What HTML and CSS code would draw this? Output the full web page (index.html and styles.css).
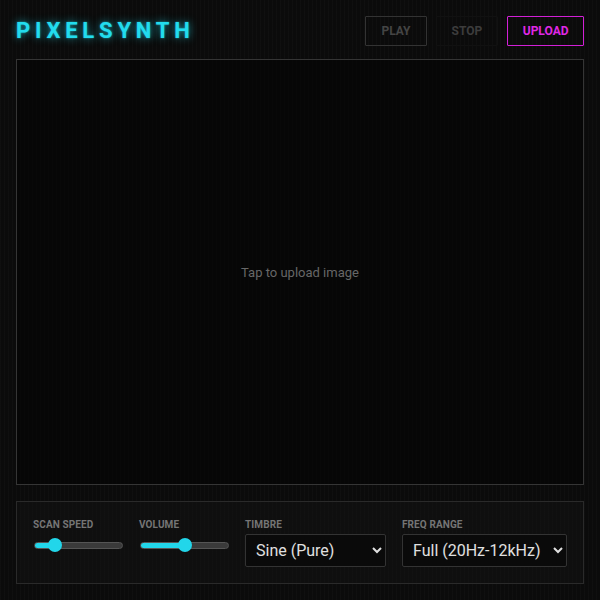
FILE: index.html
```html
<!DOCTYPE html>
<html lang="en">
<head>
<meta charset="utf-8">
<title>PixelSynth</title>
<link rel="stylesheet" href="styles.css">
</head>
<body>
<div class="app">
  <header class="header">
    <h1 class="logo">PIXELSYNTH</h1>
    <div class="actions">
      <button class="btn btn-play" disabled>PLAY</button>
      <button class="btn btn-stop" disabled>STOP</button>
      <button class="btn btn-upload">UPLOAD</button>
    </div>
  </header>
  <div class="stage">
    <span class="stage-hint">Tap to upload image</span>
  </div>
  <div class="panel">
    <div class="control control-slider">
      <label class="label">SCAN SPEED</label>
      <div class="slider-wrap">
        <input type="range" class="slider" min="0" max="100" value="18" style="--fill: 18%">
      </div>
    </div>
    <div class="control control-slider">
      <label class="label">VOLUME</label>
      <div class="slider-wrap">
        <input type="range" class="slider" min="0" max="100" value="50" style="--fill: 50%">
      </div>
    </div>
    <div class="control control-timbre">
      <label class="label">TIMBRE</label>
      <select class="select">
        <option>Sine (Pure)</option>
        <option>Square</option>
        <option>Sawtooth</option>
      </select>
    </div>
    <div class="control control-freq">
      <label class="label">FREQ RANGE</label>
      <select class="select">
        <option>Full (20Hz-12kHz)</option>
        <option>Low</option>
        <option>High</option>
      </select>
    </div>
  </div>
</div>
</body>
</html>
```
FILE: styles.css
```css
* { box-sizing: border-box; }
html, body { margin: 0; padding: 0; }
body {
  width: 600px;
  height: 600px;
  background-color: #0b0b0b;
  background-image: repeating-linear-gradient(90deg, rgba(255,255,255,0.018) 0 1px, rgba(0,0,0,0) 1px 4px);
  font-family: Roboto, "Liberation Sans", sans-serif;
  color: #ddd;
  overflow: hidden;
}
.app {
  padding: 16px;
  display: flex;
  flex-direction: column;
}
.header {
  display: flex;
  align-items: center;
  justify-content: space-between;
  height: 30px;
  margin-bottom: 13px;
}
.logo {
  margin: 0;
  font-size: 22px;
  font-weight: 700;
  letter-spacing: 4.8px;
  color: #22dcee;
  text-shadow: 0 0 8px rgba(34, 220, 238, 0.7), 0 0 2px rgba(34, 220, 238, 0.6);
  line-height: 30px;
}
.actions {
  display: flex;
  gap: 9px;
}
.btn {
  height: 30px;
  padding: 0 15px;
  background: transparent;
  border: 1px solid #333;
  font-family: Roboto, "Liberation Sans", sans-serif;
  font-size: 12px;
  font-weight: 700;
  color: #444;
  border-radius: 1px;
}
.btn-stop {
  border-color: #111;
  color: #3c3c3c;
}
.btn-upload {
  border-color: #d21fd6;
  color: #e028e6;
  padding: 0 14.5px;
}
.stage {
  height: 426px;
  border: 1px solid #353535;
  background: rgba(3,3,3,0.6);
  display: flex;
  align-items: center;
  justify-content: center;
  margin-bottom: 16px;
}
.stage-hint {
  font-size: 13px;
  color: #676767;
}
.panel {
  border: 1px solid #2a2a2a;
  background: rgba(20,20,20,0.5);
  padding: 16px;
  display: flex;
  gap: 16px;
}
.control {
  display: flex;
  flex-direction: column;
  gap: 4px;
}
.control-slider { width: 90px; }
.control-timbre { width: 141px; }
.control-freq { flex: 1; }
.label {
  font-size: 10px;
  font-weight: 700;
  line-height: 11px;
  padding-top: 1px;
  color: #757575;
  letter-spacing: 0.1px;
}
.slider-wrap {
  height: 22px;
  display: flex;
  align-items: center;
}
.slider {
  -webkit-appearance: none;
  appearance: none;
  width: 89px;
  height: 7px;
  margin: 0 0 0 1px;
  border-radius: 4px;
  border: 1px solid #555;
  background: linear-gradient(90deg, #22d6ea 0 var(--fill), #3a3a3a var(--fill) 100%);
  outline: none;
}
.slider::-webkit-slider-thumb {
  -webkit-appearance: none;
  appearance: none;
  width: 14px;
  height: 14px;
  border-radius: 50%;
  background: #22d6ea;
  border: none;
}
.select {
  color-scheme: dark;
  width: 100%;
  height: 33px;
  background: #0a0a0a;
  border: 1px solid #333;
  border-radius: 2px;
  color: #e0e0e0;
  font-family: Roboto, "Liberation Sans", sans-serif;
  font-size: 16px;
  padding: 0 6px;
}
```
